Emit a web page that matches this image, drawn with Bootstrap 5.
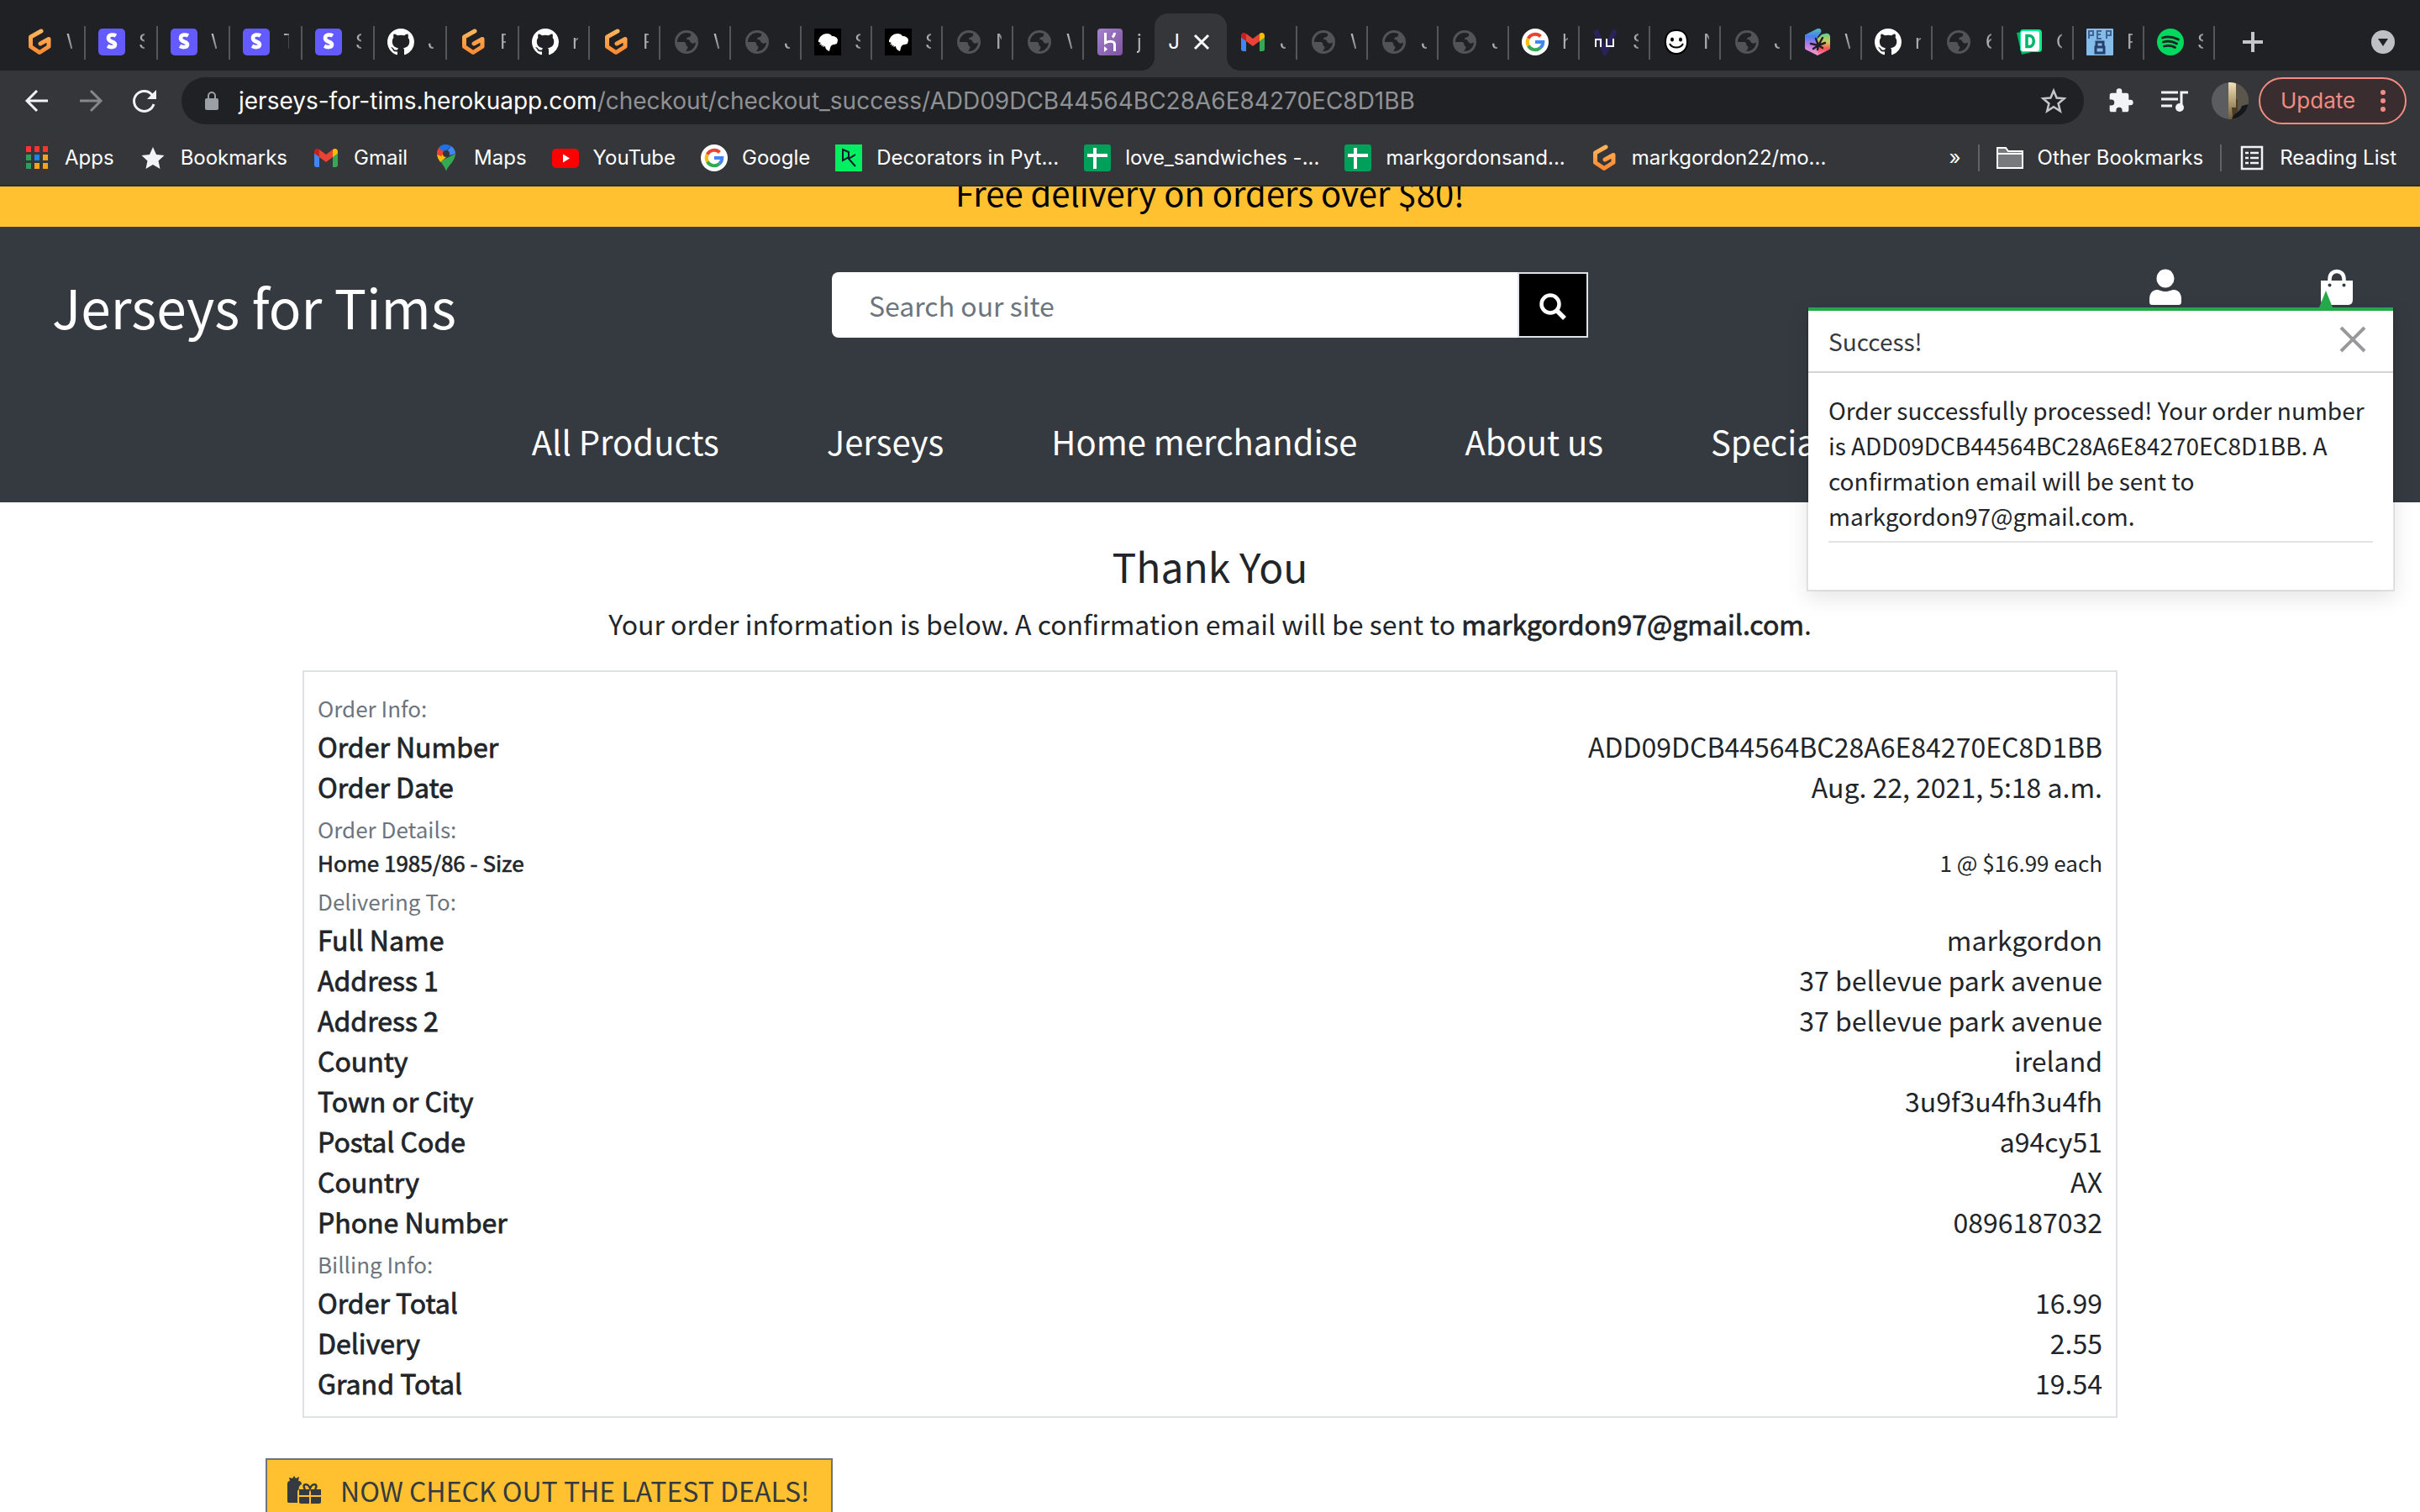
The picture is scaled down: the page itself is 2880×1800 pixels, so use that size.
<!DOCTYPE html>
<html lang="en">
<head>
<meta charset="utf-8">
<title>Jerseys for Tims</title>
<meta name="viewport" content="width=device-width, initial-scale=1">
<link rel="stylesheet" href="https://cdn.jsdelivr.net/npm/bootstrap@5.3.0/dist/css/bootstrap.min.css">
<style>
  html { font-size: 16px; }
  body { font-family: "Noto Sans CJK KR", "Noto Sans CJK JP", sans-serif; font-size: 32px; line-height: 48px; color: #212529; background: #fff; height: 100vh; overflow: hidden; display: flex; flex-direction: column; }
  svg { display: block; flex: none; }
  a { color: inherit; text-decoration: none; }

  /* browser chrome */
  .chrome-ui { font-family: Inter, Roboto, sans-serif; font-size: 24px; line-height: 32px; color: #f1f3f4; background: #35363a; border-bottom: 2px solid #2a2b2d; flex: none; }
  .tab-strip { background: #202124; height: 84px; padding: 16px 30px 0 16px; }
  .tab-item { width: 84px; height: 68px; padding: 0 15px; position: relative; flex: none; color: #d0d2d5; gap: 16px; }
  .tab-item.wide-tab { width: 86px; }
  .tab-item.sep::after { content: ""; position: absolute; right: 0; top: 15px; width: 2px; height: 40px; background: #54565a; }
  .tab-label { width: 7px; overflow: hidden; white-space: nowrap; flex: none; -webkit-mask-image: linear-gradient(to right, #000, rgba(0,0,0,.5)); mask-image: linear-gradient(to right, #000, rgba(0,0,0,.5)); }
  .tab-current { width: 86px; height: 68px; background: #35363a; border-radius: 16px 16px 0 0; position: relative; color: #fff; flex: none; gap: 16px; padding-right: 4px; }
  .tab-current::before, .tab-current::after { content: ""; position: absolute; bottom: 0; width: 16px; height: 16px; }
  .tab-current::before { left: -16px; background: radial-gradient(circle at 0 0, transparent 16px, #35363a 16px); }
  .tab-current::after { right: -16px; background: radial-gradient(circle at 100% 0, transparent 16px, #35363a 16px); }
  .bare-btn { background: none; border: 0; padding: 0; color: inherit; }
  .tool-row { height: 72px; padding: 0 16px 0 28px; }
  .omni { background: #202124; height: 56px; border-radius: 28px; padding: 0 20px 0 26px; margin: 0 24px 0 28px; }
  .omni-text { font-size: 28px; color: #8f9194; padding-left: 22px; }
  .omni-text span { color: #fff; }
  .media-icon { margin: 0 24px 0 28px; }
  .avatar { width: 44px; height: 44px; }
  .update-btn { width: 176px; height: 56px; border: 2px solid #f28b82; border-radius: 28px; background: #392d30; color: #f28b82; font-size: 26px; padding: 0 22px 0 24px; margin-left: 12px; }
  .mark-row { height: 64px; padding: 0 28px; color: #fff; }
  .mark-link { gap: 17px; white-space: nowrap; }
  .mark-list { gap: 30px; }
  .mark-sep { width: 2px; height: 32px; background: #606266; }

  /* shop */
  .promo-bar { background: #ffc12f; color: #000; height: 48px; overflow: hidden; display: flex; align-items: flex-end; justify-content: center; font-size: 40px; line-height: 60px; padding-bottom: 11px; flex: none; }
  .shop-head { background: #353940; height: 328px; flex: none; color: #fff; }
  .shop-row { padding-top: 54px; }
  .shop-row > div { padding-left: 30px; padding-right: 30px; }
  .brand { font-size: 64px; line-height: 96px; padding-left: 32px; margin-top: -8px; display: block; }
  .search-input { height: 78px; border: 0; border-radius: 8px 0 0 8px; font-size: 32px; padding: 0 44px; }
  .search-input::placeholder { color: #6c757d; opacity: 1; }
  .search-btn { width: 84px; height: 78px; background: #000; border: 2px solid #dee2e6; border-radius: 0; padding: 4px 0 0; }
  .shop-row > .head-icons { gap: 166px; padding-right: 80px; margin-top: -4px; }
  .shop-nav { gap: 128px; font-size: 40px; line-height: 60px; padding: 83px 0 0 4px; }
  .thank-block { padding: 46px 0 32px; }
  .thanks { font-size: 48px; line-height: 58px; margin: 0 0 16px; font-weight: 400; }
  .order-box { width: 75%; border: 2px solid #dee2e6; padding: 16px; }
  .info-head { color: #6c757d; font-size: 26px; height: 48px; line-height: 54px; }
  .line-item { font-size: 26px; line-height: 38px; }
  .heavy { font-weight: 400; -webkit-text-stroke: .025em currentColor; }
  .deals-btn { margin-left: 316px; border: 2px solid #6c757d; border-radius: 0; background: #ffc12f; color: #343a40; font-size: 32px; line-height: 48px; padding: 12px 26px 16px 24px; gap: 23px; }

  /* message */
  .msg-toast { position: absolute; right: 30px; top: 366px; width: 700px; border: 2px solid rgba(0,0,0,.1); border-top: 0; background: #fff; background-clip: padding-box; box-shadow: 0 8px 24px rgba(0,0,0,.1); font-size: 28px; line-height: 42px; color: #212529; z-index: 5; }
  .msg-bar { height: 4px; background: #23a84a; position: relative; }
  .msg-bar::before { content: ""; position: absolute; right: 72px; bottom: 4px; border: 8px solid transparent; border-top: 0; border-bottom: 20px solid #23a84a; }
  .msg-head { height: 74px; border-bottom: 2px solid #d3d4d5; padding: 0 32px 0 24px; color: #343a40; }
  .msg-head .bare-btn { padding-bottom: 4px; }
  .msg-body { padding: 23px 24px 56px; }
  .msg-body p { margin: 0; padding-bottom: 9px; border-bottom: 2px solid #e3e3e4; }
</style>
<script src="https://cdn.jsdelivr.net/npm/bootstrap@5.3.0/dist/js/bootstrap.bundle.min.js"></script>
</head>
<body>
<svg width="0" height="0" class="position-absolute" aria-hidden="true">
  <defs>
    <linearGradient id="gpg" x1="0" y1="0" x2="0" y2="1"><stop offset="0" stop-color="#ffb45b"/><stop offset="1" stop-color="#ff8a33"/></linearGradient>
    <linearGradient id="hkg" x1="0" y1="0" x2="1" y2="1"><stop offset="0" stop-color="#a583cb"/><stop offset="1" stop-color="#7c53a0"/></linearGradient>
    <linearGradient id="thl" x1="0" y1="0" x2="0" y2="1"><stop offset="0" stop-color="#4cc0b8"/><stop offset=".3" stop-color="#4a7df0"/><stop offset=".6" stop-color="#b77be8"/><stop offset="1" stop-color="#ff9ac8"/></linearGradient>
    <linearGradient id="thr" x1="0" y1="0" x2="0" y2="1"><stop offset="0" stop-color="#5fcf8c"/><stop offset=".4" stop-color="#d8c75a"/><stop offset=".7" stop-color="#ff4d5a"/><stop offset="1" stop-color="#ff8fc4"/></linearGradient>
    <symbol id="gitpod" viewBox="0 0 32 32"><path d="M18 3 5.500 10V21.500L16 28.500 27 21.500V12.500L17 18" fill="none" stroke="url(#gpg)" stroke-width="5" stroke-linecap="round" stroke-linejoin="round"/></symbol>
    <symbol id="stripe" viewBox="0 0 32 32"><rect width="32" height="32" rx="5" fill="#635bff"/><path d="M21 8.500C18.500 7 12 6.500 12 11.500c0 5 8 3.500 8 7.500 0 4-6 3.500-9 1.800" fill="none" stroke="#fff" stroke-width="4.600"/></symbol>
    <symbol id="github" viewBox="0 0 16 16"><path fill="#fff" d="M8 0C3.580 0 0 3.580 0 8c0 3.540 2.290 6.530 5.470 7.590.4.070.55-.17.55-.38 0-.19-.01-.82-.01-1.490-2.010.37-2.530-.49-2.690-.94-.09-.23-.48-.94-.82-1.130-.28-.15-.68-.52-.01-.53.63-.01 1.080.58 1.230.82.72 1.210 1.870.87 2.330.66.07-.52.28-.87.51-1.070-1.780-.2-3.640-.89-3.640-3.950 0-.87.31-1.590.82-2.150-.08-.2-.36-1.020.08-2.120 0 0 .67-.21 2.200.82.64-.18 1.320-.27 2-.27s1.360.09 2 .27c1.530-1.040 2.200-.82 2.200-.82.44 1.100.16 1.920.08 2.120.51.56.82 1.270.82 2.150 0 3.070-1.870 3.750-3.650 3.950.29.25.54.73.54 1.480 0 1.070-.01 1.930-.01 2.200 0 .21.15.46.55.38A8.010 8.010 0 0 0 16 8c0-4.420-3.580-8-8-8"/></symbol>
    <symbol id="globe" viewBox="0 0 32 32"><circle cx="16" cy="16" r="12.500" fill="#202124" stroke="#515357" stroke-width="3"/><path fill="#515357" d="M3 16h10c1.500 0 2.500 1.500 2.500 3v1.500c2 0 2.500 2 1.500 3.500l-3 5C7 28 3 23 3 16zM20 4c2 2 1.500 4.500-.5 6-2 0-3.500 1-3.500 3 2 0 4 .5 4.500 3 1.500 2 3.500 2 5.500 1l3-1C29 10 25 5 20 4z"/></symbol>
    <symbol id="birdy" viewBox="0 0 32 32"><rect width="32" height="32"/><path fill="#fff" d="M5 14l1-2c1-3 5-6 9-6 3 0 5 1 6 3 4 0 7 2 7 5l-1 4-3 1c-3 0-4 1-5 4l-1 4c-3-1-5-3-5-6l-3 1 1-2-3 1 1-2-3 0 2-2-3-1z"/></symbol>
    <symbol id="heroku" viewBox="0 0 32 32"><rect x="1" width="30" height="32" rx="4" fill="url(#hkg)"/><path d="M10.500 5v12c4-2 11-3 11 2v8M21.500 5c0 2.500-1 4-2.500 5.500" fill="none" stroke="#fff" stroke-width="3"/><path fill="#fff" d="m9 21 4 3.500L9 28z"/></symbol>
    <symbol id="gmail" viewBox="0 0 32 32"><path fill="#4285f4" d="M2 10v14.500C2 26 3 27 4.500 27H8V14z"/><path fill="#34a853" d="M24 14v13h3.500c1.500 0 2.500-1 2.500-2.500V10z"/><path fill="#fbbc04" d="M24 7v8l6-4.500V8.500C30 5 26.500 4 24 6z"/><path fill="#ea4335" d="M8 6v9l8 6 8-6V6l-8 6z"/><path fill="#c5221f" d="M2 8.500v2L8 15V6C5.500 4 2 5 2 8.500z"/></symbol>
    <symbol id="google" viewBox="0 0 32 32"><circle cx="16" cy="16" r="16" fill="#fff"/><g fill="none" stroke-width="4"><path stroke="#ea4335" d="M7.700 11.800A9.300 9.300 0 0 1 22.500 9.400"/><path stroke="#fbbc05" d="M7.900 20.500a9.300 9.300 0 0 1-.2-8.700"/><path stroke="#34a853" d="M22.300 22.800a9.300 9.300 0 0 1-14.400-2.300"/><path stroke="#4285f4" d="M16 16h9.300a9.300 9.300 0 0 1-3 6.800"/></g></symbol>
    <symbol id="nuxi" viewBox="0 0 32 32"><path d="m4 2 11 26L27 2" fill="none" stroke="#29235c" stroke-width="6"/><path d="M4 22v-9h6v9M17 12v9h8v-9M25 22v-2" fill="none" stroke="#fff" stroke-width="2"/></symbol>
    <symbol id="smiley" viewBox="0 0 32 32"><path fill="#fff" stroke="#000" stroke-width="2" d="M16 2c9 0 13 6 13 14s-5 14-13 14S3 24 3 16 7 2 16 2z"/><ellipse cx="11" cy="13" rx="2" ry="2.500"/><ellipse cx="21" cy="13" rx="2" ry="2.500"/><path d="M8 18c3 6 13 6 16 0" fill="none" stroke="#000" stroke-width="2"/></symbol>
    <symbol id="hexa" viewBox="0 0 32 32"><path fill="url(#thl)" d="M16 0c4-1 6 3 3 6l-3 4v22L2 25c-1-1-1-1-1-2V9c0-1 0-2 1-2z"/><path fill="url(#thr)" d="M16 32V12l5-5 4-1c4-1 6 1 6 4v13c0 1 0 1-1 2z"/><path d="M17 20 8 18M17 20l-6 4M17 20l-1 5M17 20l5 3M17 20l8-3M17 20l5-9M17 20l-3-8" fill="none" stroke="#202124" stroke-width="2.500" stroke-linecap="round"/></symbol>
    <symbol id="dcard" viewBox="0 0 32 32"><path fill="#00b56a" d="m1 5 23-4 6 24-23 6z"/><rect x="5" y="1" width="26" height="27" rx="4" fill="#03ef8c"/><rect x="6" y="3" width="22" height="24" rx="3" fill="#fff"/><path d="M13 8.500h3c7 0 7 13 0 13h-3z" fill="none" stroke="#00b56a" stroke-width="3.500"/></symbol>
    <symbol id="pep" viewBox="0 0 32 32"><rect width="32" height="32" rx="1" fill="#85bde8"/><path d="M3 12V3h5v5H3M18 3h-5v9h5M13 7h4M24 12V3h5v5h-5" fill="none" stroke="#3d6496" stroke-width="2"/><path d="M12 16h8v6h-8zM11 22h10v7H11z" fill="none" stroke="#24406b" stroke-width="3"/></symbol>
    <symbol id="spot" viewBox="0 0 32 32"><circle cx="16" cy="16" r="16" fill="#00d95f"/><path d="M6.500 11c6-2 13-1 19 2M7.500 16c5-1.500 11-1 16 2M8.500 21c4-1 9-1 13 1.500" fill="none" stroke="#202124" stroke-width="2.800" stroke-linecap="round"/></symbol>
    <symbol id="sheet" viewBox="0 0 32 32"><rect width="32" height="32" rx="3" fill="#00a05a"/><path d="M13 4v25M4 13h24" stroke="#fff" stroke-width="4"/></symbol>
  </defs>
</svg>

<div class="chrome-ui">
  <div class="tab-strip d-flex" id="tabs"></div>
  <div class="tool-row d-flex align-items-center">
    <button class="bare-btn" aria-label="Back"><svg width="32" height="32" viewBox="0 0 32 32" fill="none" stroke="#f1f3f4" stroke-width="3"><path d="M29 16H5M16 4 4 16l12 12"/></svg></button>
    <button class="bare-btn ms-4 ps-2" aria-label="Forward"><svg width="32" height="32" viewBox="0 0 32 32" fill="none" stroke="#85878a" stroke-width="3"><path d="M3 16h24M16 4l12 12-12 12"/></svg></button>
    <button class="bare-btn ms-4 ps-2" aria-label="Reload"><svg width="32" height="32" viewBox="0 0 32 32" fill="none" stroke="#f1f3f4" stroke-width="3"><path d="M27 20a12 12 0 1 1-2-11"/><path d="M30 3v11H19z" fill="#f1f3f4" stroke="none"/></svg></button>
    <div class="omni d-flex align-items-center flex-grow-1">
      <svg width="20" height="24" viewBox="0 0 20 24"><rect x="2" y="9" width="16" height="14" rx="2" fill="#9aa0a6"/><path d="M6 10V6a4 4 0 0 1 8 0v4" fill="none" stroke="#9aa0a6" stroke-width="2"/></svg>
      <div class="omni-text flex-grow-1"><span>jerseys-for-tims.herokuapp.com</span>/checkout/checkout_success/ADD09DCB44564BC28A6E84270EC8D1BB</div>
      <svg width="32" height="32" viewBox="0 0 32 32" fill="none" stroke="#c4c6c9" stroke-width="2.500"><path d="m16 4 3.600 8.500 9 .8-7 6 2.200 9-7.800-5-7.800 5 2.200-9-7-6 9-.8z"/></svg>
    </div>
    <svg class="ms-1" width="32" height="32" viewBox="0 0 24 24" fill="#f1f3f4"><path d="M20.500 11H19V7a2 2 0 0 0-2-2h-4V3.500a2.500 2.500 0 0 0-5 0V5H4a2 2 0 0 0-2 2v3.800h1.500a2.700 2.700 0 0 1 0 5.400H2V20a2 2 0 0 0 2 2h3.800v-1.500a2.700 2.700 0 0 1 5.400 0V22H17a2 2 0 0 0 2-2v-4h1.500a2.500 2.500 0 0 0 0-5"/></svg>
    <svg class="media-icon" width="40" height="32" viewBox="0 0 40 32" fill="none" stroke="#f1f3f4" stroke-width="3"><path d="M4 6h20M4 14h20M4 22h13M28 24V6h8"/><circle cx="26" cy="24" r="5" fill="#f1f3f4" stroke="none"/></svg>
    <svg class="avatar" viewBox="0 0 44 44"><defs><linearGradient id="avl" x1="0" y1="0" x2="0" y2="1"><stop offset="0" stop-color="#f0e2bd"/><stop offset=".5" stop-color="#b59f73"/><stop offset="1" stop-color="#6d5c3c"/></linearGradient></defs><clipPath id="av"><circle cx="22" cy="22" r="22"/></clipPath><g clip-path="url(#av)"><rect width="44" height="44" fill="#5b5c60"/><rect x="20" width="9" height="44" fill="url(#avl)"/><rect x="29" width="15" height="44" fill="#5a564c"/><path d="M24 30h5V20h2v14l-6 8z" fill="#4a3b24"/><path d="M24 44c2-8 10-8 12-16l8-2v18z" fill="#14171b"/></g></svg>
    <button class="update-btn d-flex align-items-center justify-content-between">Update<svg width="8" height="28" viewBox="0 0 8 28" fill="#f28b82"><circle cx="4" cy="4" r="3"/><circle cx="4" cy="14" r="3"/><circle cx="4" cy="24" r="3"/></svg></button>
  </div>
  <div class="mark-row d-flex align-items-center justify-content-between">
    <div class="mark-list d-flex">
      <a href="#" class="mark-link d-flex"><svg width="32" height="32" viewBox="0 0 32 32"><path fill="#f33" d="M3 2h6v7H3zM13 2h6v7h-6zM23 2h6v7h-6z"/><path fill="#2f9e57" d="M3 12h6v7H3zM3 22h6v7H3z"/><path fill="#1a84f0" d="M13 12h6v7h-6z"/><path fill="#f6a21c" d="M23 12h6v7h-6zM13 22h6v7h-6zM23 22h6v7h-6z"/></svg>Apps</a>
      <a href="#" class="mark-link d-flex"><svg width="32" height="32" viewBox="0 0 32 32"><path fill="#f1f3f4" d="m16 3 4 9 9.500 1-7 6.500 2 9.500L16 24l-8.500 5 2-9.500-7-6.500L12 12z"/></svg>Bookmarks</a>
      <a href="#" class="mark-link d-flex"><svg width="32" height="32"><use href="#gmail"/></svg>Gmail</a>
      <a href="#" class="mark-link d-flex"><svg width="32" height="32" viewBox="0 0 32 32"><path fill="#34a853" d="M16 32c1-6 11-12 11-21l-18 9c3 4 6 8 7 12z"/><path fill="#fbbc04" d="M5 11c0 4 2 7 4 10l12-10z"/><path fill="#1a73e8" d="M16 0A11 11 0 0 0 7 4l6 6 9-8c-2-1-4-2-6-2z"/><path fill="#ea4335" d="M7 4a11 11 0 0 0-2 8l5 2 4-5z"/><path fill="#4285f4" d="M22 2l-8 9 6 2 7-2c0-4-2-7-5-9z"/><circle cx="16" cy="11" r="4" fill="#35363a"/></svg>Maps</a>
      <a href="#" class="mark-link d-flex"><svg width="32" height="32" viewBox="0 0 32 32"><rect y="5" width="32" height="23" rx="5" fill="red"/><path fill="#fff" d="M13 11.500v10l8-5z"/></svg>YouTube</a>
      <a href="#" class="mark-link d-flex"><svg width="32" height="32"><use href="#google"/></svg>Google</a>
      <a href="#" class="mark-link d-flex"><svg width="32" height="32" viewBox="0 0 32 32"><rect width="32" height="32" fill="#03ef62"/><path d="M9 6v13l7-4V9zM24 12l-8 5 8 9M16 9v8" fill="none" stroke="#05192d" stroke-width="2"/></svg>Decorators in Pyt...</a>
      <a href="#" class="mark-link d-flex"><svg width="32" height="32"><use href="#sheet"/></svg>love_sandwiches -...</a>
      <a href="#" class="mark-link d-flex"><svg width="32" height="32"><use href="#sheet"/></svg>markgordonsand...</a>
      <a href="#" class="mark-link d-flex"><svg width="32" height="32"><use href="#gitpod"/></svg>markgordon22/mo...</a>
    </div>
    <div class="d-flex align-items-center gap-3">
      <button class="bare-btn me-1">»</button>
      <span class="mark-sep me-1"></span>
      <a href="#" class="mark-link d-flex"><svg width="32" height="32" viewBox="0 0 32 32"><path d="M1 28V4h10l3 4h17v20zM1 11h30" fill="#77797c" stroke="#fff" stroke-width="2"/></svg>Other Bookmarks</a>
      <span class="mark-sep ms-1 me-1"></span>
      <a href="#" class="mark-link d-flex"><svg width="32" height="32" viewBox="0 0 32 32"><path d="M4 3h24v26H4zM8 10h4M8 16h4M8 22h4M14 10h10M14 16h10M14 22h10" fill="none" stroke="#f1f3f4" stroke-width="2.500"/></svg>Reading List</a>
    </div>
  </div>
</div>

<div class="promo-bar">Free delivery on orders over $80!</div>
<header class="shop-head">
  <div class="shop-row row g-0">
    <div class="col-4"><a href="#" class="brand">Jerseys for Tims</a></div>
    <div class="col-4">
      <form class="d-flex">
        <input class="search-input form-control" type="text" placeholder="Search our site" aria-label="Search our site">
        <button class="search-btn d-flex align-items-center justify-content-center flex-shrink-0" type="button" aria-label="Search"><svg width="32" height="32" viewBox="0 0 32 32" fill="none" stroke="#fff"><circle cx="13" cy="13" r="10.500" stroke-width="4.500"/><path d="m21 21 9 9" stroke-width="5.500"/></svg></button>
      </form>
    </div>
    <div class="col-4 d-flex justify-content-end head-icons">
      <a href="#" aria-label="Account"><svg width="38" height="44" viewBox="0 0 38 44" fill="#fff"><ellipse cx="19" cy="11.500" rx="10.500" ry="11"/><path d="M9 25c3 0 5 2 10 2s7-2 10-2c6 0 9 5 9 11v3c0 3-1 4-4 4H4c-3 0-4-1-4-4v-3C0 30 3 25 9 25z"/></svg></a>
      <a href="#" aria-label="Bag"><svg width="38" height="44" viewBox="0 0 38 44"><path fill="#fff" d="M0 14h38v22c0 5-2 7-6 7H6c-4 0-6-2-6-7z"/><path d="M10.500 15v-3c0-12 17-12 17 0v3" fill="none" stroke="#fff" stroke-width="4.500"/><circle cx="10.500" cy="19.500" r="2" fill="#353940"/><circle cx="27.500" cy="19.500" r="2" fill="#353940"/></svg></a>
    </div>
  </div>
  <nav class="shop-nav d-flex justify-content-center text-nowrap">
    <a href="#">All Products</a><a href="#">Jerseys</a><a href="#">Home merchandise</a><a href="#">About us</a><a href="#">Special Kits</a>
  </nav>
</header>

<main>
  <div class="thank-block text-center">
    <h2 class="thanks">Thank You</h2>
    <p class="mb-0">Your order information is below. A confirmation email will be sent to <strong class="heavy">markgordon97@gmail.com</strong>.</p>
  </div>
  <div class="order-box mx-auto" id="order"></div>
  <div class="pt-5"><a href="#" class="deals-btn d-inline-flex align-items-center"><svg width="40" height="34" viewBox="0 0 40 34" fill="#343a40"><path d="M0 10c0-3 1-4 3-4L2 2l4 1 2-3 2 3 4-2-1 5c3 0 4 2 4 4-3 1-4 5-3 6-2 1-2 2-2 3v13H2c-2 0-2-1-2-2z"/><path d="M14 16h12v7H14zM28 16h12v7H28zM14 25h12v8H16c-1 0-2-1-2-2zM28 25h12v6c0 1-1 2-2 2H28z"/><path d="M21 16c-5-7 4-8 6-1 2-7 11-6 6 1" fill="none" stroke="#343a40" stroke-width="2.500"/></svg>NOW CHECK OUT THE LATEST DEALS!</a></div>
</main>

<div class="msg-toast" role="alert">
  <div class="msg-bar"></div>
  <div class="msg-head d-flex align-items-center justify-content-between">Success!<button class="bare-btn" aria-label="Close"><svg width="32" height="32" viewBox="0 0 32 32" stroke="#97999b" stroke-width="4"><path d="m2 2 28 28M30 2 2 30"/></svg></button></div>
  <div class="msg-body"><p>Order successfully processed! Your order number is ADD09DCB44564BC28A6E84270EC8D1BB. A confirmation email will be sent to markgordon97@gmail.com.</p></div>
</div>

<script>
  const tabs = [["gitpod","W"],["stripe","S"],["stripe","W"],["stripe","T"],["stripe","S"],["github","J"],["gitpod","P"],["github","r"],["gitpod","P"],["globe","W"],["globe","J"],["birdy","S"],["birdy","S"],["globe","N"],["globe","W"],["heroku","j"],null,["gmail","J"],["globe","W"],["globe","J"],["globe","J"],["google","h"],["nuxi","S"],["smiley","N"],["globe","J"],["hexa","W"],["github","r"],["globe","6"],["dcard","C"],["pep","P"],["spot","S"]];
  document.getElementById("tabs").innerHTML = tabs.map((t, i) => t
    ? `<div class="tab-item d-flex align-items-center ${i < 7 ? "wide-tab" : ""} ${i === 15 ? "" : "sep"}"><svg width="32" height="32"><use href="#${t[0]}"/></svg><span class="tab-label">${t[1]}</span></div>`
    : `<div class="tab-current d-flex align-items-center justify-content-center"><span>J</span><button class="bare-btn" aria-label="Close tab"><svg width="20" height="20" viewBox="0 0 20 20" stroke="#fff" stroke-width="3"><path d="m2 2 16 16M18 2 2 18"/></svg></button></div>`).join("")
    + `<div class="d-flex align-items-center justify-content-between flex-grow-1 ps-4 ms-2"><button class="bare-btn" aria-label="New tab"><svg width="26" height="26" viewBox="0 0 26 26" stroke="#c4c6c9" stroke-width="4"><path d="M13 1v24M1 13h24"/></svg></button><button class="bare-btn" aria-label="Search tabs"><svg width="28" height="28" viewBox="0 0 28 28"><circle cx="14" cy="14" r="14" fill="#bdc1c6"/><path fill="#202124" d="M8 10h12l-6 9z"/></svg></button></div>`;

  const order = [["Order Info:"],["Order Number","ADD09DCB44564BC28A6E84270EC8D1BB"],["Order Date","Aug. 22, 2021, 5:18 a.m."],["Order Details:"],["Home 1985/86 - Size","1 @ $16.99 each",1],["Delivering To:"],["Full Name","markgordon"],["Address 1","37 bellevue park avenue"],["Address 2","37 bellevue park avenue"],["County","ireland"],["Town or City","3u9f3u4fh3u4fh"],["Postal Code","a94cy51"],["Country","AX"],["Phone Number","0896187032"],["Billing Info:"],["Order Total","16.99"],["Delivery","2.55"],["Grand Total","19.54"]];
  document.getElementById("order").innerHTML = order.map(r => r.length === 1
    ? `<div class="info-head">${r[0]}</div>`
    : `<div class="d-flex justify-content-between ${r[2] ? "line-item" : ""}"><strong class="heavy">${r[0]}</strong><span>${r[1]}</span></div>`).join("");
</script>
</body>
</html>
